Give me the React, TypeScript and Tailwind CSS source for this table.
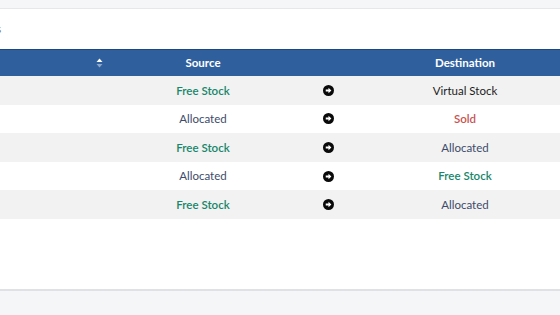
import React from "react";

type Stock = "free" | "allocated" | "virtual" | "sold";

type Row = { source: Stock; destination: Stock };

const rows: Row[] = [
  { source: "free", destination: "virtual" },
  { source: "allocated", destination: "sold" },
  { source: "free", destination: "allocated" },
  { source: "allocated", destination: "free" },
  { source: "free", destination: "allocated" },
];

const labels: Record<Stock, string> = {
  free: "Free Stock",
  allocated: "Allocated",
  virtual: "Virtual Stock",
  sold: "Sold",
};

const tones: Record<Stock, string> = {
  free: "font-semibold text-[#17866b]",
  allocated: "text-[#3d4b6b]",
  virtual: "text-[#1c1c1c]",
  sold: "font-semibold text-[#c9534f]",
};

const SortIcon = () => (
  <svg width="7" height="10" viewBox="0 0 7 10">
    <path d="M3.5 0.5 L6.5 4 L0.5 4 Z" fill="#ffffff" />
    <path d="M3.5 9.5 L6.5 6 L0.5 6 Z" fill="#ffffff" opacity="0.45" />
  </svg>
);

const ArrowCircle = () => (
  <svg width="11" height="11" viewBox="0 0 16 16">
    <circle cx="8" cy="8" r="8" fill="#0a0a0a" />
    <path d="M4 6.6 H8 V4 L12.2 8 L8 12 V9.4 H4 Z" fill="#ffffff" />
  </svg>
);

const App = () => {
  return (
    <div className="flex h-[315px] w-[560px] flex-col overflow-hidden bg-[#f5f6f8] font-['Lato',sans-serif]">
      <div className="h-[9px] border-b border-[#e5e7ea]" />
      <div className="flex h-[280px] flex-col bg-white">
        <div className="flex h-[40px] items-center">
          <span className="-ml-[4px] text-[12px] text-[#777]">s</span>
        </div>
        <div className="overflow-hidden">
          <div className="grid w-[570px] grid-cols-[110px_186px_64px_210px] border-t border-[#1d477f] bg-[#2f5f9d] text-[11.5px] font-bold text-white">
            <div className="flex h-[26px] items-center justify-end pr-[7px]">
              <SortIcon />
            </div>
            <div className="flex items-center justify-center">Source</div>
            <div />
            <div className="flex items-center justify-center">Destination</div>
          </div>
          {rows.map((row, i) => (
            <div
              key={i}
              className={`grid h-[28.6px] w-[570px] grid-cols-[110px_186px_64px_210px] items-center text-[11.5px] ${
                i % 2 === 0 ? "bg-[#f2f2f2]" : "bg-white"
              }`}>
              <div />
              <div className={`text-center ${tones[row.source]}`}>{labels[row.source]}</div>
              <div className="flex justify-center">
                <ArrowCircle />
              </div>
              <div className={`text-center ${tones[row.destination]}`}>{labels[row.destination]}</div>
            </div>
          ))}
        </div>
      </div>
      <div className="h-[2px] bg-[#dfe1e4]" />
    </div>
  );
};

export default App;
